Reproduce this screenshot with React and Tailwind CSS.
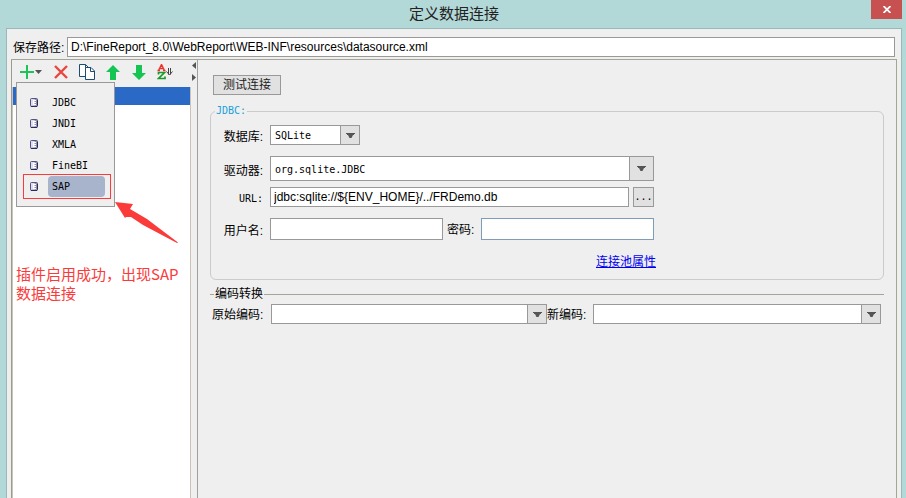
const Caret = () => (
  <svg className="h-[5px] w-[9px]" viewBox="0 0 9 5">
    <path d="M0 0h9v1H8v1H7L5.500 5h-2L2 2H1V1H0z" fill="#555" />
  </svg>
);

const ComboBox = ({ id, options, className, buttonClass }) => (
  <div className={`relative ${className}`}>
    <select
      id={id}
      className="block h-full w-full appearance-none rounded-none border border-[#999] bg-white pl-1 pr-7 pt-[2px] font-['DejaVu_Sans_Mono','Noto_Sans_CJK_SC',monospace] text-[10px] text-black outline-none"
    >
      {options.map((option) => (
        <option key={option}>{option}</option>
      ))}
    </select>
    <span
      className={`pointer-events-none absolute inset-y-0 right-0 flex items-center justify-center border border-[#999] bg-[#e1e1e1] ${buttonClass}`}
    >
      <Caret />
    </span>
  </div>
);

const DatabaseIcon = () => (
  <svg className="h-[9px] w-2" viewBox="0 0 8 9">
    <rect x="0.500" y="0.500" width="7" height="8" rx="1" fill="#a5a5cf" stroke="#55557c" />
    <path d="M1 1h3.500v6.500H1z" fill="#dcdcf5" />
    <path d="M5 1h2v6.500H5z" fill="#8e8eb4" />
    <path d="M4 2.500h2M4 4.500h2M4 6.500h2M3.500 2v5" stroke="#fff" />
    <path d="M7.500 2v5.500M1 8.500h6" fill="none" stroke="#2d2d52" />
  </svg>
);

const menuItems = ["JDBC", "JNDI", "XMLA", "FineBI", "SAP"];

const ConnectionMenu = () => (
  <ul className="absolute left-1 top-[22px] z-10 w-[99px] border border-[#999] bg-[#efefef] pb-[9px] pl-2 pr-[5px] pt-[9px]">
    {menuItems.map((item) => {
      const active = item === "SAP";
      return (
        <li key={item} className={active ? "outline outline-offset-1 outline-[#fb3a3a]" : ""}>
          <button type="button" className="flex h-[21px] w-full items-center gap-[10px] pl-[5px]">
            <DatabaseIcon />
            <span
              className={`flex h-[21px] w-[57px] items-center pl-1 pt-px font-['DejaVu_Sans_Mono',monospace] text-[10px] text-black ${
                active ? "rounded bg-[#a8b4cc]" : ""
              }`}
            >
              {item}
            </span>
          </button>
        </li>
      );
    })}
  </ul>
);

const Toolbar = () => (
  <div className="relative flex h-[27px] items-center bg-[#efefef] pb-[3px] pl-2">
    <button type="button" aria-label="Add" className="flex w-[34px] items-center gap-px">
      <svg className="h-[14px] w-[14px]" viewBox="0 0 14 14">
        <path d="M7 0v14M0 7h14" stroke="#1ec45a" strokeWidth="2" />
      </svg>
      <svg className="h-1 w-[7px]" viewBox="0 0 7 4">
        <path d="M0 0h7L3.500 4z" fill="#555" />
      </svg>
    </button>
    <button type="button" aria-label="Delete" className="flex w-[25px]">
      <svg className="h-[14px] w-[14px]" viewBox="0 0 14 14">
        <path d="M1 1l12 12M13 1L1 13" stroke="#ea4640" strokeWidth="2.400" />
      </svg>
    </button>
    <button type="button" aria-label="Copy" className="flex w-[27px]">
      <svg className="h-4 w-4" viewBox="0 0 16 16" fill="#fff" stroke="#1d4c70">
        <path d="M0.500 0.500h6l3 3v9h-9z" />
        <path d="M6.500 3.500h5.500l3.500 3.500v8.500h-9z" />
        <path d="M6.500 0.500v3M11.500 3.500v4h4" fill="none" />
      </svg>
    </button>
    <button type="button" aria-label="Move up" className="flex w-[26px]">
      <svg className="h-[15px] w-[14px]" viewBox="0 0 14 15">
        <path d="M7 0l7 7h-4v8H4V7H0z" fill="#14c553" />
      </svg>
    </button>
    <button type="button" aria-label="Move down" className="flex w-[25px]">
      <svg className="h-[15px] w-[14px]" viewBox="0 0 14 15">
        <path d="M7 15l7-7h-4V0H4v8H0z" fill="#14c553" />
      </svg>
    </button>
    <button type="button" aria-label="Sort" className="flex">
      <svg className="h-4 w-4" viewBox="0 0 16 16" fill="none">
        <path d="M1.500 6.500L4.500 0.500 7.500 6.500M2.500 4.500h4M0.500 6.500h2.500M6 6.500h2.500" stroke="#f0302b" strokeWidth="1.400" />
        <path d="M1.500 10.500V8.500H7.500L1.500 14.500H8V12.500" stroke="#1b9a2e" strokeWidth="1.700" />
        <path d="M11.500 4v6.500M13.500 4v6.500M9.500 7.500l3 3.500 3-3.500" stroke="#444" />
      </svg>
    </button>
    <ConnectionMenu />
  </div>
);

const SourceList = () => (
  <aside className="flex w-[180px] shrink-0 flex-col border-l border-[#a09a8c]">
    <Toolbar />
    <div className="relative flex-1 border-x border-[#cbc4b4] bg-white">
      <div className="h-[18px] bg-[#2a69c6]" />
      <svg className="absolute left-[102px] top-[115px] h-[43px] w-[64px]" viewBox="0 0 64 43">
        <path d="M0 0l18 2-3 5 17 10 31 23.500-1 0.500L28 23l-12-8-5 0-1 1z" fill="#fb3a3a" />
      </svg>
      <p className="pl-[3px] pt-[159px] font-['Noto_Sans_CJK_SC',sans-serif] text-[15px] leading-[19px] text-[#fb3a3a]">
        插件启用成功，出现SAP
        <br />
        数据连接
      </p>
    </div>
  </aside>
);

const Splitter = () => (
  <div className="flex w-[7px] shrink-0 flex-col items-center gap-[5px] border-r border-[#a0a0a0] pt-[2px]">
    <svg className="h-[7px] w-1" viewBox="0 0 4 7">
      <path d="M4 0v7L0 3.500z" fill="#555" />
    </svg>
    <svg className="h-[7px] w-1" viewBox="0 0 4 7">
      <path d="M0 0v7l4-3.500z" fill="#555" />
    </svg>
  </div>
);

const labelClass = "w-[52px] shrink-0 pt-1 text-right";
const inputClass = "min-w-0 border border-[#999] bg-white px-[3px] font-['Liberation_Sans',sans-serif] text-xs text-black outline-none";

const JdbcForm = () => (
  <fieldset className="flex h-[175px] flex-col rounded-md border border-[#cbcbcb]">
    <legend className="ml-1 px-px font-['DejaVu_Sans_Mono',monospace] text-[10px] leading-3 text-[#18a0dc]">JDBC:</legend>
    <div className="flex h-7 items-end gap-[7px]">
      <label htmlFor="database" className={labelClass}>数据库:</label>
      <ComboBox id="database" options={["SQLite"]} className="h-5 w-[90px]" buttonClass="w-5" />
    </div>
    <div className="mt-[11px] flex h-[25px] items-center gap-[7px]">
      <label htmlFor="driver" className={labelClass}>驱动器:</label>
      <ComboBox id="driver" options={["org.sqlite.JDBC"]} className="h-[25px] w-[384px]" buttonClass="w-[25px]" />
    </div>
    <div className="mt-[6px] flex h-5 items-center gap-[7px]">
      <label htmlFor="url" className={`${labelClass} font-['DejaVu_Sans_Mono',monospace] text-[10px]`}>URL:</label>
      <div className="flex w-[384px] gap-1">
        <input id="url" className={`${inputClass} h-5 flex-1`} defaultValue="jdbc:sqlite://${ENV_HOME}/../FRDemo.db" />
        <button type="button" className="h-5 w-[21px] border border-[#999] bg-[#e1e1e1] font-['DejaVu_Sans_Mono',monospace] text-[10px]">...</button>
      </div>
    </div>
    <div className="mt-[11px] flex h-[22px] items-center gap-[7px]">
      <label htmlFor="user" className={labelClass}>用户名:</label>
      <div className="flex w-[384px] items-center">
        <input id="user" className={`${inputClass} h-[22px] w-[173px]`} />
        <label htmlFor="password" className="flex-1 pl-1 pt-[2px]">密码:</label>
        <input id="password" type="password" className="h-[22px] w-[173px] border border-[#7f9db9] bg-white px-[3px] text-xs outline-none" />
      </div>
    </div>
    <div className="flex w-[445px] justify-end pt-[14px]">
      <a href="#pool" className="text-[#0000f0] underline">连接池属性</a>
    </div>
  </fieldset>
);

const EncodingForm = () => (
  <fieldset className="mt-[6px] border-t border-[#a5a596]">
    <legend className="ml-1 px-px leading-4">编码转换</legend>
    <div className="flex items-center pl-[2px] pr-[3px] pt-[2px]">
      <label htmlFor="old-charset" className="w-[59px] shrink-0 pt-[2px]">原始编码:</label>
      <ComboBox id="old-charset" options={[""]} className="h-5 w-[276px]" buttonClass="w-5" />
      <label htmlFor="new-charset" className="w-[46px] shrink-0 pt-[2px]">新编码:</label>
      <ComboBox id="new-charset" options={[""]} className="h-5 flex-1" buttonClass="w-5" />
    </div>
  </fieldset>
);

export default function App() {
  return (
    <div className="flex min-h-screen flex-col bg-[#b3d8d8] pl-[6px] pr-1 font-['Liberation_Sans','Noto_Sans_CJK_SC',sans-serif] text-xs text-black">
      <header className="relative flex h-7 shrink-0 items-center justify-center">
        <h1 className="text-[15px] leading-5 text-[#222]">定义数据连接</h1>
        <button type="button" aria-label="Close" className="absolute right-0 top-0 flex h-[19px] w-[31px] items-center justify-center bg-[#c75050]">
          <svg className="h-[7px] w-2" viewBox="0 0 8 7">
            <path d="M0.500 0L7.500 7M7.500 0L0.500 7" stroke="#fff" strokeWidth="1.800" />
          </svg>
        </button>
      </header>

      <main className="flex flex-1 flex-col border-x border-t border-[#9ab8b8] bg-[#efefef] pl-1 pr-1 pt-2">
        <div className="flex items-center pl-[2px] pr-[2px]">
          <label htmlFor="path" className="w-[54px] shrink-0 pt-[2px]">保存路径:</label>
          <input id="path" className={`${inputClass} h-5 flex-1`} defaultValue="D:\FineReport_8.0\WebReport\WEB-INF\resources\datasource.xml" />
        </div>

        <div className="mt-[2px] flex flex-1 border-r border-t border-[#a5a596]">
          <SourceList />
          <Splitter />
          <section className="min-w-0 flex-1 pl-3 pr-3 pt-[15px]">
            <button type="button" className="mb-[10px] ml-[3px] block h-5 w-[68px] border border-[#999] bg-[#e1e1e1] text-[#222]">
              测试连接
            </button>
            <JdbcForm />
            <EncodingForm />
          </section>
        </div>
      </main>
    </div>
  );
}
